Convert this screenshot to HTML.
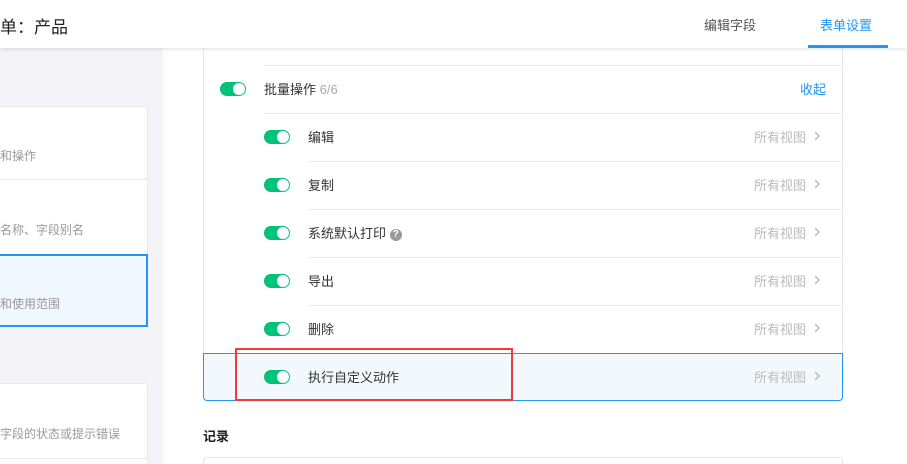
<!DOCTYPE html>
<html style="overflow:hidden"><head><meta charset="utf-8"><style>
*{box-sizing:border-box;margin:0;padding:0}
html,body{width:907px;height:464px;overflow:hidden}
body{background:#fff;font-family:"Liberation Sans","Noto Sans CJK SC",sans-serif;position:relative;font-size:13px;color:#333}
.abs{position:absolute}
.hdr{left:0;top:0;width:907px;height:48px;background:#fff;box-shadow:0 1px 4px rgba(0,0,0,.12);z-index:5}
.left{left:0;top:48px;width:163px;height:416px;background:#f4f4f8}
.card{left:0;width:148px;background:#fff;border:1px solid #e8e8ec;border-left:none;border-radius:0 4px 4px 0}
.sub{font-size:12px;color:#999;left:0}
.tg{width:26px;height:14px;border-radius:7px;background:#00c27a}
.tg::after{content:"";position:absolute;right:1px;top:1px;width:12px;height:12px;border-radius:50%;background:#fff}
.line{height:1px;background:#ebebeb}
.gray{color:#bbb;font-size:13px}
.gray svg{position:absolute;left:59px;top:4px}
</style></head><body>
<div class="abs hdr">
 <div class="abs" style="left:0;top:13px;font-size:17px;color:#222">单：产品</div>
 <div class="abs" style="left:704px;top:15px;font-size:13px;color:#555">编辑字段</div>
 <div class="abs" style="left:820px;top:15px;font-size:13px;color:#2196f3">表单设置</div>
 <div class="abs" style="left:808px;top:45px;width:80px;height:3px;background:#2196f3"></div>
</div>
<div class="abs left"></div>
<div class="abs card" style="top:106px;height:74px"></div>
<div class="abs sub" style="top:147px">和操作</div>
<div class="abs card" style="top:179px;height:76px;border-radius:0"></div>
<div class="abs sub" style="top:221px">名称、字段别名</div>
<div class="abs card" style="top:254px;height:73px;background:#f0f7fe;border:2px solid #2196f3;border-left:none;border-radius:0"></div>
<div class="abs sub" style="top:295px">和使用范围</div>
<div class="abs card" style="top:383px;height:76px"></div>
<div class="abs sub" style="top:425px">字段的状态或提示错误</div>
<div class="abs card" style="top:458px;height:10px;border-radius:0"></div>

<div class="abs" style="left:203px;top:48px;width:640px;height:305px;border-left:1px solid #e6e6e6;border-right:1px solid #e6e6e6"></div>
<div class="abs line" style="left:264px;top:65px;width:579px"></div>
<div class="abs tg" style="left:220px;top:82px"></div>
<div class="abs" style="left:264px;top:79px">批量操作 <span style="color:#aaa">6/6</span></div>
<div class="abs" style="left:800px;top:79px;color:#2196f3">收起</div>
<div class="abs line" style="left:264px;top:113px;width:579px"></div>

<div class="abs tg" style="left:264px;top:130px"></div><div class="abs" style="left:308px;top:127px">编辑</div><div class="abs gray" style="left:754px;top:127px">所有视图<svg width="8" height="10" viewBox="0 0 8 10"><path d="M2 1l4 4-4 4" fill="none" stroke="#bbb" stroke-width="1.5"/></svg></div>
<div class="abs line" style="left:308px;top:161px;width:535px"></div>
<div class="abs tg" style="left:264px;top:178px"></div><div class="abs" style="left:308px;top:175px">复制</div><div class="abs gray" style="left:754px;top:175px">所有视图<svg width="8" height="10" viewBox="0 0 8 10"><path d="M2 1l4 4-4 4" fill="none" stroke="#bbb" stroke-width="1.5"/></svg></div>
<div class="abs line" style="left:308px;top:209px;width:535px"></div>
<div class="abs tg" style="left:264px;top:226px"></div><div class="abs" style="left:308px;top:223px">系统默认打印 <span style="display:inline-block;width:12px;height:12px;border-radius:50%;background:#999;color:#fff;font-size:10px;text-align:center;line-height:12px;font-weight:bold;vertical-align:1px">?</span></div><div class="abs gray" style="left:754px;top:223px">所有视图<svg width="8" height="10" viewBox="0 0 8 10"><path d="M2 1l4 4-4 4" fill="none" stroke="#bbb" stroke-width="1.5"/></svg></div>
<div class="abs line" style="left:308px;top:257px;width:535px"></div>
<div class="abs tg" style="left:264px;top:274px"></div><div class="abs" style="left:308px;top:271px">导出</div><div class="abs gray" style="left:754px;top:271px">所有视图<svg width="8" height="10" viewBox="0 0 8 10"><path d="M2 1l4 4-4 4" fill="none" stroke="#bbb" stroke-width="1.5"/></svg></div>
<div class="abs line" style="left:308px;top:305px;width:535px"></div>
<div class="abs tg" style="left:264px;top:322px"></div><div class="abs" style="left:308px;top:319px">删除</div><div class="abs gray" style="left:754px;top:319px">所有视图<svg width="8" height="10" viewBox="0 0 8 10"><path d="M2 1l4 4-4 4" fill="none" stroke="#bbb" stroke-width="1.5"/></svg></div>

<div class="abs" style="left:203px;top:353px;width:640px;height:48px;background:#f3f8fd;border:1px solid #2196f3;border-radius:0 0 4px 4px"></div>
<div class="abs tg" style="left:264px;top:370px"></div><div class="abs" style="left:308px;top:367px">执行自定义动作</div><div class="abs gray" style="left:754px;top:367px">所有视图<svg width="8" height="10" viewBox="0 0 8 10"><path d="M2 1l4 4-4 4" fill="none" stroke="#bbb" stroke-width="1.5"/></svg></div>
<div class="abs" style="left:235px;top:348px;width:278px;height:53px;border:2px solid #f23a3a"></div>

<div class="abs" style="left:203px;top:426px;font-size:13px;font-weight:bold;color:#222">记录</div>
<div class="abs" style="left:203px;top:457px;width:640px;height:7px;border:1px solid #e6e6e6;border-bottom:none;border-radius:4px 4px 0 0"></div>
</body></html>
